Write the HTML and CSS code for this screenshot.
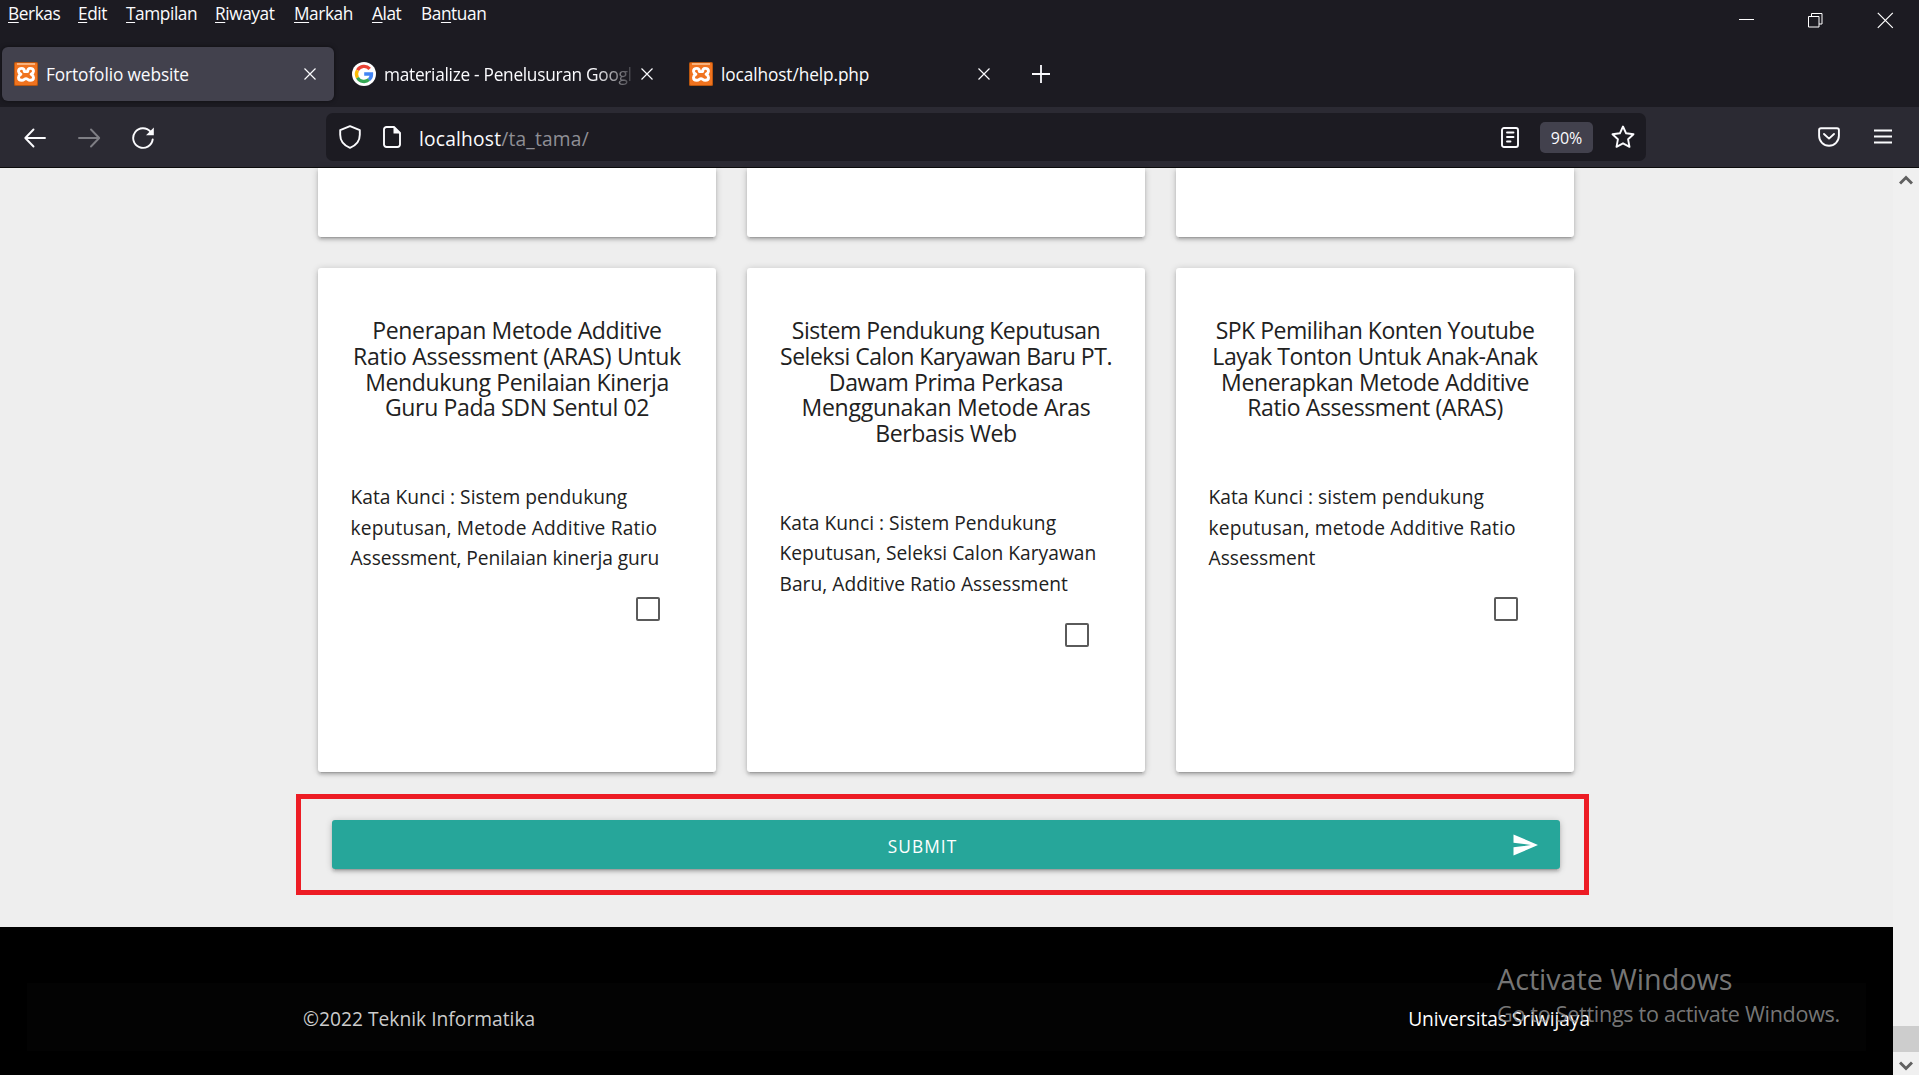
FILE: index.html
```
<!DOCTYPE html>
<html lang="id">
<head>
<meta charset="utf-8">
<title>Fortofolio website</title>
<link rel="stylesheet" href="styles.css">
</head>
<body>
<svg class="defs" width="0" height="0">
  <symbol id="xampp" viewBox="0 0 24 24">
    <rect width="24" height="24" rx="1.5" fill="#b9560f"/>
    <rect x="1" y="1" width="22" height="22" rx="1" fill="#f0731f"/>
    <rect x="3" y="1" width="18" height="2" fill="#f9b27c"/>
    <path d="M8 6.400C5.800 6.400 4.500 7.600 4.500 9.200c0 1.500 1 2.200 2.400 3-1.400.8-2.400 1.600-2.400 3.200 0 1.700 1.300 2.900 3.300 2.900 2.300 0 2.600-1.700 4.200-1.700s1.900 1.700 4.200 1.700c2 0 3.300-1.200 3.300-2.900 0-1.600-1-2.400-2.400-3.200 1.400-.8 2.400-1.500 2.400-3 0-1.600-1.300-2.800-3.500-2.800-2.200 0-2.300 1.600-2.300 3.200h-3.400C10.300 8 10.200 6.400 8 6.400z" fill="none" stroke="#fff" stroke-width="2.900" stroke-linejoin="round"/>
  </symbol>
  <symbol id="x" viewBox="0 0 12 12"><path d="M.5.5l11 11M11.500.5L.5 11.500" fill="none" stroke="#fbfbfe" stroke-width="1.200"/></symbol>
</svg>
<div class="window">
  <header class="titlebar">
    <div class="top">
      <nav class="menu">
        <span class="m1"><u>B</u>erkas</span><span class="m2"><u>E</u>dit</span><span class="m3"><u>T</u>ampilan</span><span class="m4"><u>R</u>iwayat</span><span class="m5"><u>M</u>arkah</span><span class="m6"><u>A</u>lat</span><span class="m7">Ba<u>n</u>tuan</span>
      </nav>
      <div class="controls">
        <svg width="15" height="17"><path d="M0 7.500h15" stroke="#fff"/></svg>
        <svg width="15" height="15"><path d="M.5 3.500h10.500v10.500H.5zM3.500 3.500V.5h10.500V11H11" fill="none" stroke="#fff"/></svg>
        <svg width="17" height="17"><path d="M.8.8l15 15M15.800.8l-15 15" stroke="#fff" stroke-width="1.200"/></svg>
      </div>
    </div>
    <div class="tabs">
      <div class="tab active"><svg class="fav"><use href="#xampp"/></svg><span class="label">Fortofolio website</span><svg class="close"><use href="#x"/></svg></div>
      <div class="tab"><svg class="fav" viewBox="0 0 24 24"><circle cx="12" cy="12" r="12" fill="#fff"/><g fill="none" stroke-width="3.300"><path d="M17.700 6.900A7.500 7.500 0 0 0 5.500 8.300" stroke="#ea4335"/><path d="M5.500 8.300a7.500 7.500 0 0 0 0 7.500" stroke="#fbbc05"/><path d="M5.500 15.700a7.500 7.500 0 0 0 11.500 1.900" stroke="#34a853"/><path d="M12.200 12h7.300c.1 2.500-.8 4.300-2.500 5.700" stroke="#4285f4"/></g></svg><span class="label fade">materialize - Penelusuran Googl</span><svg class="close"><use href="#x"/></svg></div>
      <div class="tab"><svg class="fav"><use href="#xampp"/></svg><span class="label">localhost/help.php</span><svg class="close"><use href="#x"/></svg></div>
      <svg class="plus" width="18" height="18"><path d="M9 0v18M0 9h18" stroke="#fbfbfe" stroke-width="1.800"/></svg>
    </div>
  </header>
  <div class="toolbar">
    <div class="nav">
      <svg width="24" height="24" viewBox="0 0 24 24"><path d="M22 13H2.500M10.500 4.500L2.300 13l8.200 8.500" class="ln"/></svg>
      <svg class="dim" width="24" height="24" viewBox="0 0 24 24"><path d="M2 13h20M14 4.500l8.200 8.500-8.200 8.500" class="ln"/></svg>
      <svg width="24" height="24" viewBox="0 0 24 24"><path d="M19.500 6.700A9.800 9.800 0 1 0 21.700 14.500" class="ln"/><path d="M22.800 2.500v7.800H15z" fill="#fbfbfe"/></svg>
    </div>
    <div class="urlbar">
      <svg width="22" height="24" viewBox="0 0 22 24"><path d="M11 1.200l9.800 4v4.600c0 6-3.600 10.600-9.800 13-6.200-2.400-9.800-7-9.800-13V5.200z" class="ln"/></svg>
      <svg class="page" width="18" height="22" viewBox="0 0 18 22"><path d="M11 1H3.500A2.500 2.500 0 0 0 1 3.500v15A2.500 2.500 0 0 0 3.500 21h11a2.500 2.500 0 0 0 2.500-2.500V7z" class="ln"/><path d="M10.500 1v6.500H17z" fill="#fbfbfe"/></svg>
      <span class="url">localhost<i>/ta_tama/</i></span>
      <svg class="reader" width="18" height="21" viewBox="0 0 18 21"><rect x="1" y="1" width="16" height="19" rx="2" class="ln"/><path d="M6 5.500h6.500M6 10h6.500M6 14.500h3.500" class="ln"/></svg>
      <span class="zoom">90%</span>
      <svg width="24" height="24" viewBox="0 0 24 24"><path d="M12 1.500l3.100 6.800 7.400.9-5.400 5.100 1.400 7.500L12 18.300l-6.500 3.500 1.400-7.500L1.500 9.200l7.400-.9z" class="ln"/></svg>
    </div>
    <div class="right">
      <svg width="22" height="20" viewBox="0 0 22 20"><path d="M3 1.200h16a1.900 1.900 0 0 1 1.900 1.900v5.700a9.900 9.900 0 0 1-19.800 0V3.100A1.900 1.900 0 0 1 3 1.200zM6 7l5 4.600L16 7" class="ln"/></svg>
      <svg width="18" height="16" viewBox="0 0 18 16"><path d="M0 1.500h18M0 7.500h18M0 13.500h18" class="ln"/></svg>
    </div>
  </div>
  <div class="view">
    <main class="page-body">
      <div class="cards">
        <article class="card cut"></article><article class="card cut"></article><article class="card cut"></article>
        <article class="card">
          <h5>Penerapan Metode Additive<br><span class="loose">Ratio Assessment (ARAS) Untuk</span><br>Mendukung Penilaian Kinerja<br>Guru Pada SDN Sentul 02</h5>
          <p>Kata Kunci : Sistem pendukung<br><span class="wide">keputusan, Metode Additive Ratio</span><br><span class="narrow">Assessment, Penilaian kinerja guru</span></p>
          <span class="check"></span>
        </article>
        <article class="card">
          <h5><span class="tight">Sistem Pendukung Keputusan</span><br><span class="tight">Seleksi Calon Karyawan Baru PT.</span><br>Dawam Prima Perkasa<br><span class="loose">Menggunakan Metode Aras</span><br>Berbasis Web</h5>
          <p>Kata Kunci : Sistem Pendukung<br>Keputusan, Seleksi Calon Karyawan<br>Baru, Additive Ratio Assessment</p>
          <span class="check"></span>
        </article>
        <article class="card">
          <h5><span class="tight">SPK Pemilihan Konten Youtube</span><br>Layak Tonton Untuk Anak-Anak<br>Menerapkan Metode Additive<br>Ratio Assessment (ARAS)</h5>
          <p>Kata Kunci : sistem pendukung<br><span class="wide">keputusan, metode Additive Ratio</span><br>Assessment</p>
          <span class="check"></span>
        </article>
      </div>
      <div class="submit-row">
        <div class="btn"><span>SUBMIT</span><svg width="26" height="22" viewBox="0 0 26 22"><path d="M.5.500L25 11 .5 21.500V13.300L18 11 .5 8.700z" fill="#fff"/></svg></div>
        <div class="marker"></div>
      </div>
      <footer class="footer"><div class="copyright"><span>©2022 Teknik Informatika</span><span class="univ">Universitas Sriwijaya</span></div></footer>
    </main>
    <aside class="scrollbar">
      <svg width="14" height="12" viewBox="0 0 14 12"><path d="M1 9.500l6-6 6 6" fill="none" stroke="#606060" stroke-width="3"/></svg>
      <div class="thumb"></div>
      <svg width="14" height="12" viewBox="0 0 14 12"><path d="M1 2.500l6 6 6-6" fill="none" stroke="#606060" stroke-width="3"/></svg>
    </aside>
  </div>
  <div class="watermark"><div class="w1">Activate Windows</div><div class="w2">Go to Settings to activate Windows.</div></div>
</div>
</body>
</html>
```
FILE: styles.css
```
* { box-sizing: border-box; }
body { margin: 0; font-family: "Open Sans", "Noto Sans", sans-serif; overflow: hidden; }
svg { display: block; flex: none; }
.defs { position: absolute; }
.ln { fill: none; stroke: #fbfbfe; stroke-width: 1.9; stroke-linecap: round; stroke-linejoin: round; }
.window { position: relative; width: 1919px; height: 1075px; display: flex; flex-direction: column; overflow: hidden; }

.titlebar { height: 107px; background: #1c1b22; color: #fbfbfe; font-size: 17.28px; }
.top { height: 47px; display: flex; justify-content: space-between; }
.menu { display: flex; height: 26px; line-height: 27px; padding-left: 8px; letter-spacing: -.42px; white-space: nowrap; }
.menu u { text-underline-offset: 2px; text-decoration-thickness: 1px; text-decoration-skip-ink: none; }
.m1 { width: 70px; }
.m2 { width: 48px; }
.m3 { width: 89px; }
.m4 { width: 79px; }
.m5 { width: 78px; }
.m6 { width: 49px; }
.controls { display: flex; align-items: center; height: 40px; gap: 54px; padding-right: 25px; }
.tabs { display: flex; height: 54px; padding-left: 2px; align-items: center; gap: 5px; }
.tab { width: 332px; height: 54px; border-radius: 6px; display: flex; align-items: center; padding: 0 18px 0 12px; letter-spacing: -.1px; }
.active { background: #42414d; box-shadow: 0 0 4px rgba(0,0,0,.5); }
.fav { width: 24px; height: 24px; }
.label { flex: 1; margin-left: 8px; white-space: nowrap; overflow: hidden; }
.fade { letter-spacing: -.28px; -webkit-mask-image: linear-gradient(to left, transparent, #000 44px); mask-image: linear-gradient(to left, transparent, #000 44px); }
.close { width: 12px; height: 12px; margin-left: 2px; }
.tab:nth-child(2) { padding-left: 13px; }
.tab:nth-child(3) { padding-left: 13px; }
.plus { margin-left: 19px; }

.toolbar { height: 61px; background: #2b2a33; border-bottom: 1px solid #0c0c0d; display: flex; align-items: center; }
.nav { width: 326px; padding-left: 23px; display: flex; gap: 30px; }
.dim { opacity: .4; }
.urlbar { width: 1320px; height: 48px; background: #1c1b22; border-radius: 7px; display: flex; align-items: center; padding: 0 11px 0 13px; }
.page { margin-left: 22px; }
.url { flex: 1; margin-left: 18px; padding-top: 3px; font-size: 19.2px; letter-spacing: .2px; color: #fbfbfe; }
.url i { font-style: normal; color: #8f8f95; }
.zoom { margin: 0 18px 0 21px; width: 53px; height: 31px; line-height: 32px; border-radius: 5px; background: #42414d; color: #fbfbfe; font-size: 16px; text-align: center; }
.right { flex: 1; display: flex; justify-content: flex-end; align-items: center; gap: 34px; padding-right: 27px; }

.view { flex: 1; min-height: 0; display: flex; }
.page-body { width: 1893px; background: #eee; display: flex; flex-direction: column; }
.cards { width: 1256px; margin-left: 318px; display: grid; grid-template-columns: repeat(3, 398px); column-gap: 31px; row-gap: 31px; grid-template-rows: 69px 504px; }
.card { background: #fff; border-radius: 3px; padding: 50px 32px 0; color: #212121; box-shadow: 0 3px 3px 0 rgba(0,0,0,.14), 0 4px 1px -3px rgba(0,0,0,.12), 0 1px 7px 0 rgba(0,0,0,.2); display: flex; flex-direction: column; }
.cut { border-radius: 0 0 3px 3px; padding: 0; }
h5 { margin: 0 -10px 61px; font-weight: 400; font-size: 23.04px; line-height: 25.8px; letter-spacing: -.38px; text-align: center; white-space: nowrap; }
.loose { letter-spacing: -.27px; }
.tight { letter-spacing: -.5px; }
p { margin: 0 0 24px; padding-left: .5px; font-size: 19.2px; line-height: 30.4px; letter-spacing: .03px; white-space: nowrap; }
.wide { letter-spacing: .16px; }
.narrow { letter-spacing: -.06px; }
.check { width: 24px; height: 24px; border: 2px solid #5a5a5a; border-radius: 2px; align-self: flex-end; margin-right: 24px; }
.submit-row { height: 155px; padding: 48px 0 0 332px; position: relative; }
.btn { width: 1228px; height: 49px; background: #26a69a; border-radius: 3px; color: #fff; display: flex; align-items: center; padding-right: 21px; box-shadow: 0 3px 3px 0 rgba(0,0,0,.14), 0 4px 1px -3px rgba(0,0,0,.12), 0 1px 7px 0 rgba(0,0,0,.2); }
.btn span { flex: 1; text-align: center; font-size: 17.28px; letter-spacing: 1.1px; padding-top: 3px; }
.marker { position: absolute; left: 296px; top: 22px; width: 1293px; height: 101px; border: 5px solid #ed1c24; }
.footer { flex: 1; background: #000; padding: 56px 27px 0; }
.copyright { height: 68px; background: #030303; display: flex; justify-content: space-between; align-items: center; padding: 2px 276px 0 276px; font-size: 19.2px; letter-spacing: .02px; color: #ccc; }
.univ { color: #fff; letter-spacing: -.06px; }
.scrollbar { width: 26px; background: #f0f0f0; display: flex; flex-direction: column; align-items: center; padding: 6px 0 3px; }
.thumb { width: 26px; height: 26px; margin: auto 0 8px; background: #cdcdcd; }
.watermark { position: absolute; left: 1497px; top: 959px; color: rgba(150,150,150,.8); white-space: nowrap; }
.w1 { font-size: 28.8px; line-height: 40px; letter-spacing: -.06px; }
.w2 { font-size: 21.6px; line-height: 30px; letter-spacing: -.31px; }
```
